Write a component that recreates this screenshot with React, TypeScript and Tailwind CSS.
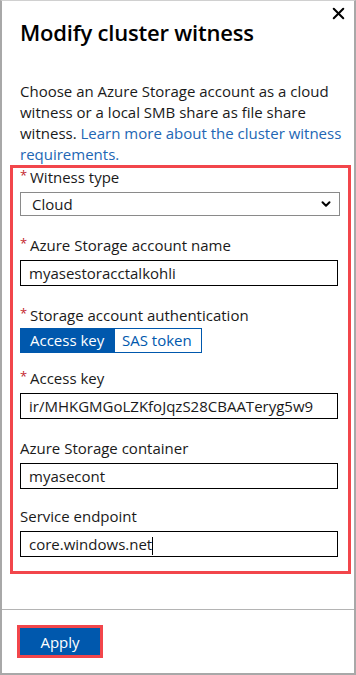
import { ChevronDown, X } from "lucide-react"

function Label({ text, required }: { text: string; required?: boolean }) {
  return (
    <div className="flex items-start h-[18px] text-[15px] leading-[18px] text-[#1a1a1a] whitespace-nowrap">
      {required && <span className="w-[10px] text-[#c4262e] text-[13px] leading-[14px]">*</span>}
      <span>{text}</span>
    </div>
  )
}

function TextBox({ value, caret }: { value: string; caret?: boolean }) {
  return (
    <div className="mt-[6px] w-[318px] h-[26px] border border-black bg-white pl-[8px] text-[15px] leading-[24px] text-[#1a1a1a]">
      <div className="w-[286px] whitespace-nowrap overflow-hidden">
        {value}
        {caret && <span className="inline-block w-px h-[18px] bg-black align-middle" />}
      </div>
    </div>
  )
}

export default function App() {
  return (
    <div
      className="w-[356px] h-[675px] bg-white border-l-2 border-r-2 border-b-2 border-t border-t-[#d0d0d0] border-[#a8a8a8] flex flex-col"
      style={{ fontFamily: '"Open Sans", "Noto Sans", sans-serif' }}
    >
      <div className="relative h-[62px] pl-[18px] pt-[14px]">
        <h1 className="text-[22px] leading-[34px] font-semibold text-black tracking-[-0.2px]">Modify cluster witness</h1>
        <X className="absolute right-[6px] top-[3px] w-[19px] h-[19px] text-black" strokeWidth={2.6} />
      </div>

      <p className="pl-[18px] pr-[12px] mt-[18px] text-[15px] leading-[21px] text-[#1a1a1a]">
        Choose an Azure Storage account as a cloud witness or a local SMB share as file share witness.{" "}
        <span className="text-[#2266b4]">Learn more about the cluster witness requirements.</span>
      </p>

      <div className="ml-[8px] w-[341px] h-[409px] border-[3px] border-[#f2464b] pl-[7px]">
        <Label text="Witness type" required />
        <div className="mt-[6px] w-[320px] h-[24px] border border-[#8a8a8a] flex items-center justify-between pl-[11px] pr-[6px] text-[15px] text-[#1a1a1a]">
          <span>Cloud</span>
          <ChevronDown className="w-[14px] h-[14px] text-black" strokeWidth={3.4} />
        </div>

        <div className="mt-[20px]">
          <Label text="Azure Storage account name" required />
        </div>
        <TextBox value="myasestoracctalkohli" />

        <div className="mt-[20px]">
          <Label text="Storage account authentication" required />
        </div>
        <div className="mt-[4px] flex h-[25px] text-[15px] leading-[23px]">
          <div className="w-[95px] bg-[#0058ad] text-white border border-[#0058ad] pl-[9px]">Access key</div>
          <div className="w-[87px] border border-[#0058ad] border-l-0 text-[#0058ad] pl-[7px]">SAS token</div>
        </div>

        <div className="mt-[16px]">
          <Label text="Access key" required />
        </div>
        <TextBox value="ir/MHKGMGoLZKfoJqzS28CBAATeryg5w9" />

        <div className="mt-[20px]">
          <Label text="Azure Storage container" />
        </div>
        <TextBox value="myasecont" />

        <div className="mt-[18px]">
          <Label text="Service endpoint" />
        </div>
        <TextBox value="core.windows.net" caret />
      </div>

      <div className="mt-[35px] h-px bg-[#b4b4b4]" />

      <div className="pl-[15px] pt-[15px]">
        <button className="w-[86px] h-[33px] border-[3px] border-[#f2464b] bg-[#0058ad] text-white text-[15px] leading-[26px]">
          Apply
        </button>
      </div>
    </div>
  )
}
